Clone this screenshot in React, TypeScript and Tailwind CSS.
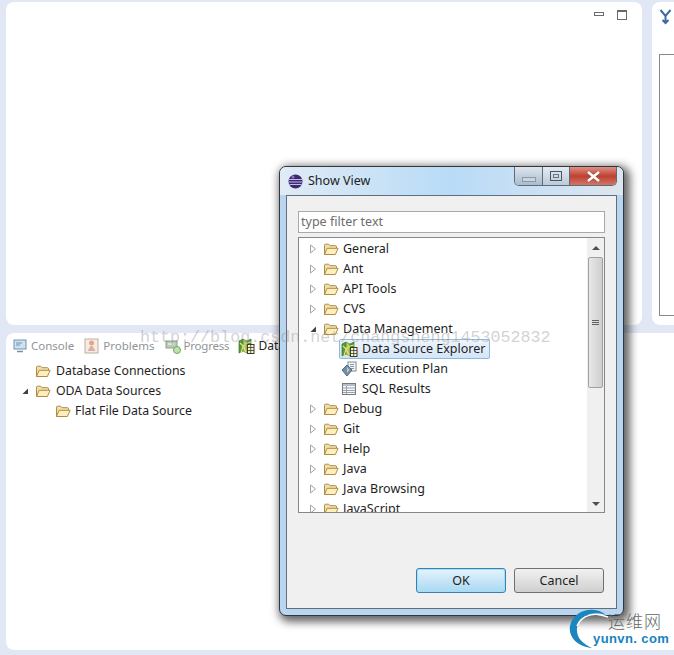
const uiFont = "font-['Noto_Sans','Open_Sans',sans-serif]";

function Folder() {
  return (
    <svg width="16" height="14" viewBox="0 0 16 14" className="shrink-0">
      <path d="M1.5 12.5V3.2c0-.6.4-1 1-1h3.2l1.3 1.5h5.5c.6 0 1 .4 1 1v1.3" fill="#f3dfa8" stroke="#a98b4a" />
      <path d="M1.5 12.5l2.6-6.2h11l-2.7 6.2z" fill="#fdeebd" stroke="#b08c42" strokeLinejoin="round" />
    </svg>
  );
}

function Arrow({ open }: { open?: boolean }) {
  if (open) {
    return (
      <svg width="8" height="8" viewBox="0 0 8 8" className="shrink-0">
        <path d="M7 1.5V7H1.5z" fill="#404040" />
      </svg>
    );
  }
  return (
    <svg width="8" height="10" viewBox="0 0 8 10" className="shrink-0">
      <path d="M1.5 1v8L6.5 5z" fill="#fff" stroke="#a6a6a6" />
    </svg>
  );
}

function DataIcon() {
  return (
    <svg width="17" height="17" viewBox="0 0 17 17" className="shrink-0">
      <path d="M1 3l4-2v12l-4 2z" fill="#4f9a3c" stroke="#3f7030" strokeWidth="0.7" />
      <path d="M5 1l4 2v12l-4-2z" fill="#a8cf62" stroke="#5f8a34" strokeWidth="0.7" />
      <path d="M9 3l4-2v5H9z" fill="#4f9a3c" stroke="#3f7030" strokeWidth="0.7" />
      <path d="M2 5l3 3 4-3 4-1M3 15l2-7 3 6" fill="none" stroke="#efdc7a" strokeWidth="1.2" />
      <rect x="9.500" y="6.500" width="6.500" height="9" fill="#f6f2d6" stroke="#3c3c26" />
      <path d="M9.500 9.500h6.500M9.500 12.500h6.500M12.700 6.500v9" stroke="#3c3c26" strokeWidth="0.8" />
    </svg>
  );
}

function PlanIcon() {
  return (
    <svg width="16" height="16" viewBox="0 0 16 16" className="shrink-0">
      <rect x="7" y="1" width="8" height="9" fill="#f7f7f7" stroke="#7d8794" />
      <path d="M9 3.500h4M9 5.500h4M9 7.500h4" stroke="#8a93a0" />
      <path d="M6 4l5 5-5 6-5-6z" fill="#6d8fb5" stroke="#4e6a8c" />
      <path d="M6 6l2.500 3L6 12z" fill="#e5c877" />
    </svg>
  );
}

function TableIcon() {
  return (
    <svg width="14" height="12" viewBox="0 0 14 12" className="shrink-0">
      <rect x="0.500" y="0.500" width="13" height="11" fill="#f6f7f9" stroke="#747c86" />
      <rect x="1" y="1" width="12" height="2" fill="#b6bec9" />
      <path d="M1 5h12M1 7.500h12M1 9.500h12M4.500 3v8" stroke="#9aa2ad" />
    </svg>
  );
}

function TreeRow({ label, arrow }: { label: string; arrow: "open" | "closed" }) {
  return (
    <div className="flex h-5 items-center pl-[10px] text-[12.500px] text-[#1e1e1e]">
      <span className="flex w-[14px] items-center"><Arrow open={arrow === "open"} /></span>
      <Folder />
      <span className="ml-[4px]">{label}</span>
    </div>
  );
}

const topRows = ["General", "Ant", "API Tools", "CVS"];
const bottomRows = ["Debug", "Git", "Help", "Java", "Java Browsing", "JavaScript"];

function ShowViewDialog() {
  return (
    <div className={`absolute left-[279px] top-[166px] flex h-[450px] w-[345px] flex-col rounded-[7px] border border-[#33363b] bg-[#b9d6f0] px-[6px] pb-[6px] shadow-[3px_3px_9px_3px_rgba(0,0,0,0.6)] ${uiFont}`}>
      <div className="-mx-[6px] flex h-[28px] shrink-0 items-start justify-between rounded-t-[6px] bg-gradient-to-r from-[#e0ebf5] via-[#b8dbf7] to-[#dde6ee] px-[6px]">
        <div className="flex items-center gap-[5px] pl-[2px] pt-[5px] text-[12.500px] text-[#222]">
          <svg width="15" height="15" viewBox="0 0 15 15">
            <circle cx="7.500" cy="7.500" r="7" fill="#3a2a6e" />
            <path d="M1 5.500h13M.6 8h13.800M1.500 10.500h12" stroke="#c9b8ea" strokeWidth="1" />
            <circle cx="5" cy="3" r="1.500" fill="#8a78c0" />
          </svg>
          Show View
        </div>
        <div className="flex h-[19px] overflow-hidden rounded-b-[5px] border border-t-0 border-[#5f6b78]">
          <div className="flex w-[28px] items-center justify-center border-r border-[#5f6b78] bg-gradient-to-b from-[#dde6ef] to-[#a9bccd]">
            <div className="mt-[6px] h-[5px] w-[14px] border border-[#8b99a8] bg-[#c9d5e0]" />
          </div>
          <div className="flex w-[27px] items-center justify-center border-r border-[#5f6b78] bg-gradient-to-b from-[#e3ebf2] to-[#bccbd9]">
            <div className="h-[10px] w-[12px] border border-[#4c5660] p-[2px]"><div className="h-full w-full border border-[#6d7680]" /></div>
          </div>
          <div className="flex w-[46px] items-center justify-center bg-gradient-to-b from-[#dd9085] via-[#bf3f30] to-[#cf7668]">
            <svg width="15" height="11" viewBox="0 0 15 11">
              <path d="M2 1l11 9M13 1L2 10" stroke="#6d3a34" strokeWidth="4" strokeOpacity="0.4" />
              <path d="M2 1l11 9M13 1L2 10" stroke="#fff" strokeWidth="2.600" />
            </svg>
          </div>
        </div>
      </div>
      <div className="flex min-h-0 flex-1 flex-col border border-[#5f6f80] bg-[#f0f0f0] px-[11px] pt-[15px]">
        <div className="flex h-[22px] shrink-0 items-center border border-[#a9a9a9] bg-white px-[2px] text-[12.500px] text-[#6d6d6d]">
          type filter text
        </div>
        <div className="mt-[4px] flex h-[276px] shrink-0 overflow-hidden border border-[#828790] bg-white">
          <div className="min-w-0 flex-1 overflow-hidden pt-px">
            {topRows.map((r) => (
              <TreeRow key={r} label={r} arrow="closed" />
            ))}
            <TreeRow label="Data Management" arrow="open" />
            <div className="flex h-5 items-center pl-[40px] text-[12.500px] text-[#1e1e1e]">
              <div className="flex h-[20px] w-[151px] items-center gap-[4px] rounded-[2px] border border-[#8fb8de] bg-gradient-to-b from-[#eef5fc] to-[#d3e5f8] pl-[1px]">
                <DataIcon />
                Data Source Explorer
              </div>
            </div>
            <div className="flex h-5 items-center pl-[42px] text-[12.500px] text-[#1e1e1e]">
              <PlanIcon />
              <span className="ml-[5px]">Execution Plan</span>
            </div>
            <div className="flex h-5 items-center pl-[43px] text-[12.500px] text-[#1e1e1e]">
              <TableIcon />
              <span className="ml-[6px]">SQL Results</span>
            </div>
            {bottomRows.map((r) => (
              <TreeRow key={r} label={r} arrow="closed" />
            ))}
          </div>
          <div className="flex w-[17px] shrink-0 flex-col items-center bg-[#f0f0f0]">
            <div className="flex h-[19px] items-center justify-center">
              <div className="h-0 w-0 border-x-[4px] border-b-[4px] border-x-transparent border-b-[#505050]" />
            </div>
            <div className="flex h-[131px] w-[15px] items-center justify-center rounded-[2px] border border-[#a0a0a0] bg-gradient-to-r from-[#e8e8e8] to-[#cfcfcf]">
              <div className="flex flex-col gap-[1px]">
                <div className="h-px w-[7px] bg-[#606060]" />
                <div className="h-px w-[7px] bg-[#606060]" />
                <div className="h-px w-[7px] bg-[#606060]" />
              </div>
            </div>
            <div className="flex-1" />
            <div className="flex h-[17px] items-center justify-center">
              <div className="h-0 w-0 border-x-[4px] border-t-[4px] border-x-transparent border-t-[#505050]" />
            </div>
          </div>
        </div>
        <div className="flex-1" />
        <div className="mb-[15px] mr-px flex justify-end gap-[8px] text-[12.500px] text-[#222]">
          <button className="flex h-[25px] w-[90px] items-center justify-center rounded-[3px] border border-[#3c7fb1] bg-gradient-to-b from-[#e3f3fc] to-[#a9d9f2] pt-[2px] shadow-[inset_0_0_0_1px_#9ee0f8]">OK</button>
          <button className="flex h-[25px] w-[90px] items-center justify-center rounded-[3px] border border-[#707070] bg-gradient-to-b from-[#f2f2f2] to-[#cfcfcf] pt-[2px]">Cancel</button>
        </div>
      </div>
    </div>
  );
}

function App() {
  return (
    <div className={`relative flex h-[655px] w-[674px] flex-col gap-[8px] overflow-hidden bg-[#e2e7f5] pb-[5px] pl-[6px] pt-[2px] ${uiFont}`}>
      <div className="flex h-[323px] shrink-0 gap-[10px]">
        <div className="flex w-[636px] justify-end gap-[13px] rounded-[8px] bg-white pr-[15px] pt-[8px]">
          <div className="mt-[2px] h-[4px] w-[10px] border border-[#6a6a6a]" />
          <div className="h-[10px] w-[10px] border border-[#6a6a6a] border-t-[2px]" />
        </div>
        <div className="flex flex-1 flex-col rounded-l-[8px] bg-white pl-[7px] pt-[6px]">
          <svg width="14" height="18" viewBox="0 0 14 18" className="shrink-0">
            <path d="M1.500 2l5 6 5-6M6.500 8v7M3.500 12l3 3 3-3" fill="none" stroke="#3e6a9e" strokeWidth="2" />
          </svg>
          <div className="mb-[9px] mt-[28px] flex-1 border border-r-0 border-[#8a8a8a]" />
        </div>
      </div>
      <div className="flex-1 rounded-l-[8px] bg-white pl-[7px] pt-[4px] text-[11.500px]">
        <div className="flex items-center text-[#8f9498]">
          <svg width="14" height="14" viewBox="0 0 14 14" className="shrink-0">
            <rect x="1" y="1" width="12" height="9" fill="#cfe0ee" stroke="#6f93ad" />
            <path d="M3 4h6M3 6h4" stroke="#6f93ad" />
            <path d="M4 12.500h6" stroke="#6f93ad" strokeWidth="1.500" />
          </svg>
          <span className="ml-[4px]">Console</span>
          <svg width="15" height="16" viewBox="0 0 15 16" className="ml-[10px] shrink-0">
            <rect x="1" y="1" width="13" height="14" fill="#f7ecdf" stroke="#b9b0a4" />
            <circle cx="7.500" cy="5" r="2.500" fill="#e5a58f" />
            <path d="M3.500 13l3-5h2l3 5z" fill="#d9b0a5" />
          </svg>
          <span className="ml-[4px]">Problems</span>
          <svg width="16" height="16" viewBox="0 0 16 16" className="ml-[10px] shrink-0">
            <rect x="1" y="3" width="11" height="7" fill="#b9ccb8" stroke="#8fa08e" />
            <path d="M3 6h6" stroke="#fff" />
            <circle cx="12" cy="12" r="3.500" fill="#bfe0b0" stroke="#6fa860" />
          </svg>
          <span className="ml-[3px] tracking-[-0.200px]">Progress</span>
          <span className="ml-[9px]"><DataIcon /></span>
          <span className="ml-[3px] text-[12px] text-[#222]">Data Source Explorer</span>
        </div>
        <div className="mt-[6px] text-[12.300px] text-[#1e1e1e]">
          <div className="flex h-5 items-center pl-[22px]">
            <Folder />
            <span className="ml-[5px]">Database Connections</span>
          </div>
          <div className="flex h-5 items-center pl-[8px]">
            <span className="w-[14px]"><Arrow open /></span>
            <Folder />
            <span className="ml-[5px]">ODA Data Sources</span>
          </div>
          <div className="flex h-5 items-center pl-[42px]">
            <Folder />
            <span className="ml-[4px]">Flat File Data Source</span>
          </div>
        </div>
      </div>

      <ShowViewDialog />

      {/* watermark over the page */}
      <div className="pointer-events-none absolute left-[140px] top-[328px] font-['Liberation_Mono',monospace] text-[16.700px] leading-5 text-[#8c8c8c]/40">
        http://blog.csdn.net/changsheng1453052832
      </div>
      <div className="pointer-events-none absolute left-[568px] top-[608px] flex h-[42px] w-[104px]">
        <svg width="44" height="44" viewBox="0 0 44 44" className="absolute left-0 top-0">
          <path d="M38 7C28-2 6 0 2 18c-2 12 9 21 22 22-9-4-16-10-15-20C10 9 24 2 38 7z" fill="#1b86bd" />
          <path d="M40 9C28 4 14 6 9 18" fill="none" stroke="#fff" strokeWidth="1.500" />
        </svg>
        <div className="ml-[40px] mt-[3px] font-['Noto_Sans_CJK_SC',sans-serif] text-[17px] font-light leading-5 tracking-[1px] text-[#666]">运维网</div>
        <div className="absolute left-[25px] top-[23px] font-['Liberation_Sans',sans-serif] text-[13px] font-bold leading-4 tracking-[0.400px] text-[#1583c2]">yunvn. com</div>
      </div>
    </div>
  );
}

export default App;
